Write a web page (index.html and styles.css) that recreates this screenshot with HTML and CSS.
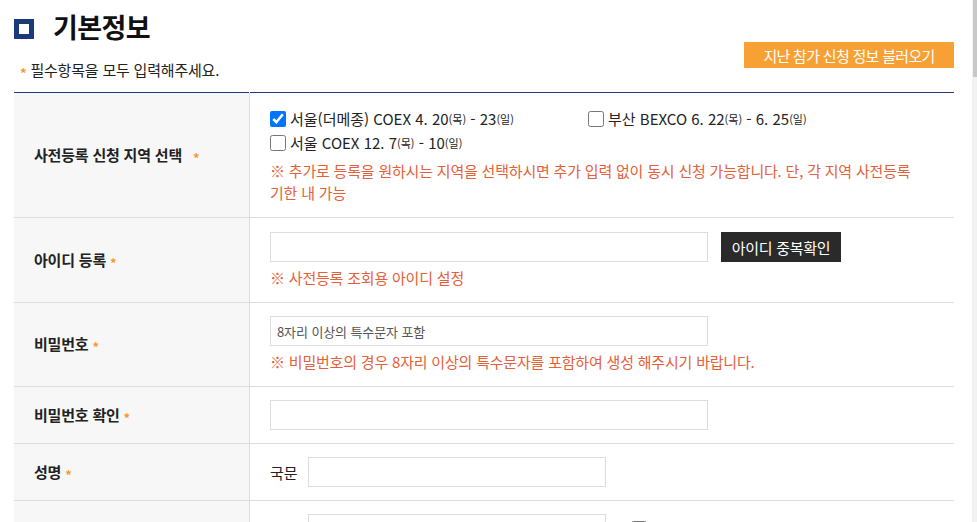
FILE: index.html
```html
<!DOCTYPE html>
<html lang="ko">
<head>
  <meta charset="UTF-8" />
  <meta name="viewport" content="width=device-width, initial-scale=1.0" />
  <title>기본정보</title>
  <link rel="stylesheet" href="styles.css">
</head>
<body>
  <div class="page">
    <!-- Section header -->
    <div class="section-head">
      <div class="head-left">
        <h2 class="section-title"><span class="title-icon"></span>기본정보</h2>
        <p class="required-guide"><span class="star">*</span> 필수항목을 모두 입력해주세요.</p>
      </div>
      <button type="button" class="btn-load">지난 참가 신청 정보 불러오기</button>
    </div>

    <!-- Form table -->
    <table class="form-table">
      <tr class="row-tall">
        <th>사전등록 신청 지역 선택 <span class="star wide">*</span></th>
        <td>
          <div class="region-list">
            <label class="region"><input type="checkbox" checked> 서울(더메종) COEX 4. 20<small>(목)</small>&nbsp;- 23<small>(일)</small></label>
            <label class="region"><input type="checkbox"> 부산 BEXCO 6. 22<small>(목)</small>&nbsp;- 6. 25<small>(일)</small></label>
            <label class="region"><input type="checkbox"> 서울 COEX 12. 7<small>(목)</small>&nbsp;- 10<small>(일)</small></label>
          </div>
          <p class="note region-note">※ 추가로 등록을 원하시는 지역을 선택하시면 추가 입력 없이 동시 신청 가능합니다. 단, 각 지역 사전등록 기한 내 가능</p>
        </td>
      </tr>
      <tr class="row-tall">
        <th>아이디 등록 <span class="star">*</span></th>
        <td>
          <div class="field-line">
            <input type="text" class="input-long">
            <button type="button" class="btn-dark">아이디 중복확인</button>
          </div>
          <p class="note">※ 사전등록 조회용 아이디 설정</p>
        </td>
      </tr>
      <tr>
        <th>비밀번호 <span class="star">*</span></th>
        <td>
          <input type="password" class="input-long" placeholder="8자리 이상의 특수문자 포함">
          <p class="note">※ 비밀번호의 경우 8자리 이상의 특수문자를 포함하여 생성 해주시기 바랍니다.</p>
        </td>
      </tr>
      <tr>
        <th>비밀번호 확인 <span class="star">*</span></th>
        <td><input type="password" class="input-long"></td>
      </tr>
      <tr>
        <th>성명 <span class="star">*</span></th>
        <td>
          <div class="field-line">
            <span class="field-label">국문</span>
            <input type="text" class="input-mid">
          </div>
        </td>
      </tr>
      <tr>
        <th></th>
        <td>
          <div class="field-line">
            <span class="field-label">영문</span>
            <input type="text" class="input-mid">
            <label class="region extra"><input type="checkbox"> 해당사항 없음</label>
          </div>
        </td>
      </tr>
    </table>
  </div>

  <div class="scrollbar"><div class="scrollbar-thumb"></div></div>
</body>
</html>
```

FILE: styles.css
```css
body {
  margin: 0;
  padding: 0;
  font-family: "Noto Sans CJK KR", "Noto Sans", sans-serif;
  color: #222;
  background: #fff;
}

.page {
  width: 940px;
  padding: 10px 0 0 14px;
}

/* header */
.section-head {
  display: flex;
  justify-content: space-between;
  align-items: flex-end;
  margin-bottom: 9px;
}

.section-title {
  display: flex;
  align-items: center;
  margin: 0;
  font-size: 27px;
  line-height: 34px;
  font-weight: 700;
  color: #111;
  letter-spacing: -0.6px;
}

.title-icon {
  display: inline-block;
  width: 10px;
  height: 10px;
  border: 5px solid #1b3a7a;
  margin: 4px 19px 0 0;
}

.required-guide {
  margin: 16px 0 0 6px;
  font-size: 15px;
  line-height: 20px;
  letter-spacing: -0.2px;
}

.star {
  color: #f39a2e;
  font-size: 13px;
  font-weight: 700;
  vertical-align: -2px;
}

.star.wide {
  margin-left: 7px;
}

.btn-load {
  width: 210px;
  height: 26px;
  margin-bottom: 15px;
  padding: 0;
  border: none;
  background: #f7a135;
  color: #fff;
  font-family: inherit;
  font-size: 15px;
  letter-spacing: -0.7px;
  cursor: pointer;
}

/* table */
.form-table {
  width: 940px;
  border-collapse: collapse;
  border-top: 1px solid #1f3a78;
}

.form-table th,
.form-table td {
  border-bottom: 1px solid #ddd;
}

.form-table th {
  width: 195px;
  padding: 0 20px;
  background: #f7f7f7;
  border-right: 1px solid #ddd;
  text-align: left;
  font-size: 15px;
  font-weight: 700;
  letter-spacing: -0.2px;
  color: #222;
}

.form-table td {
  padding: 13px 20px;
  font-size: 15px;
}

.form-table .row-tall td {
  padding-top: 14px;
}

.region-list {
  display: flex;
  flex-wrap: wrap;
}

.region {
  display: inline-flex;
  align-items: center;
  width: 318px;
  line-height: 24px;
  font-size: 15px;
  white-space: nowrap;
  cursor: pointer;
}

.region input {
  width: 16px;
  height: 16px;
  margin: 0 4px 0 0;
}

.region small {
  font-size: 11px;
}

.note {
  margin: 5px 0 0;
  font-size: 15px;
  line-height: 22px;
  color: #e4603a;
  letter-spacing: -0.2px;
}

.region-note {
  max-width: 655px;
}

.field-line {
  display: flex;
  align-items: center;
}

input[type="text"],
input[type="password"] {
  box-sizing: border-box;
  height: 30px;
  padding: 0 6px;
  border: 1px solid #ddd;
  font-family: inherit;
  font-size: 13px;
  letter-spacing: -0.1px;
  color: #333;
  outline: none;
}

input::placeholder {
  color: #555;
}

.input-long {
  width: 438px;
  display: block;
}

.input-mid {
  width: 298px;
}

.field-label {
  margin-right: 10px;
  font-size: 15px;
}

.btn-dark {
  width: 120px;
  height: 30px;
  margin-left: 13px;
  padding: 0;
  border: none;
  background: #2a2a2a;
  color: #fff;
  font-family: inherit;
  font-size: 15px;
  letter-spacing: -0.3px;
  cursor: pointer;
}

.region.extra {
  width: auto;
  margin-left: 25px;
}

/* page scrollbar */
.scrollbar {
  position: fixed;
  top: 0;
  right: 0;
  width: 5px;
  height: 100%;
  background: #f1f1f1;
}

.scrollbar-thumb {
  width: 4px;
  height: 77px;
  margin-left: 1px;
  background: #c8c8c8;
}
```
